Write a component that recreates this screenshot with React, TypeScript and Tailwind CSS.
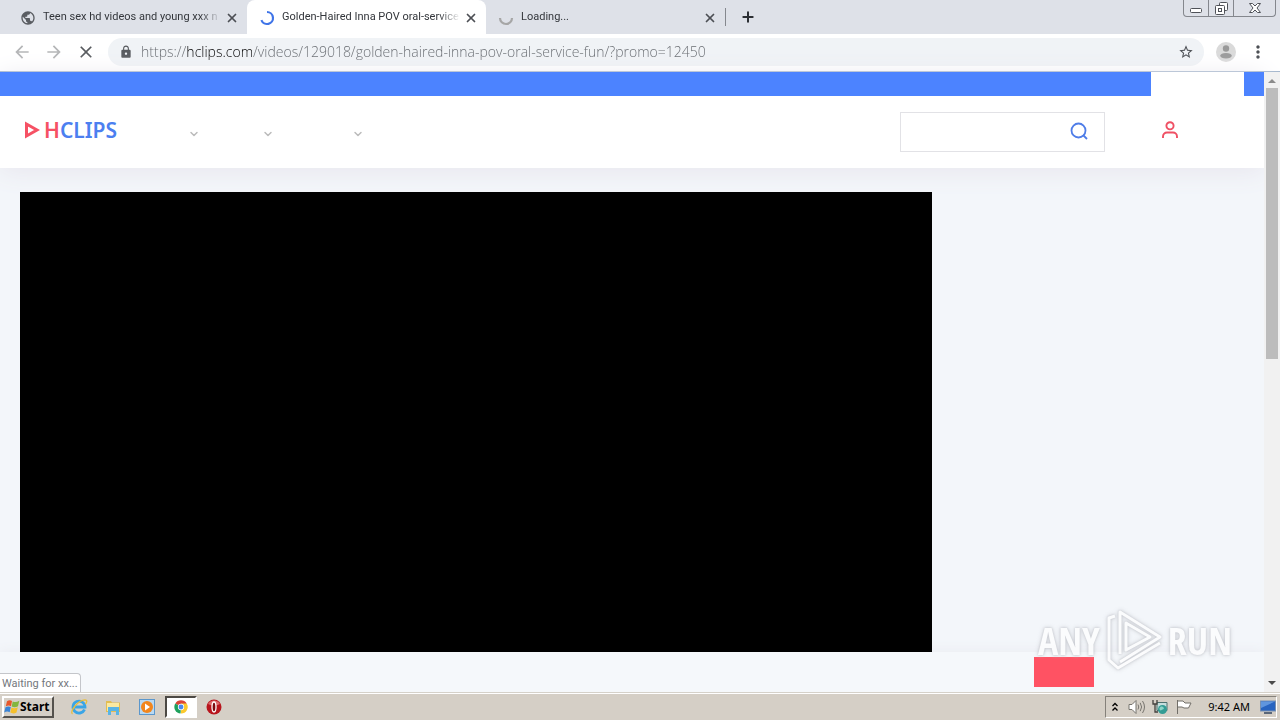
import { useState } from "react";
import type { ReactNode } from "react";
import {
  MdArrowBack,
  MdArrowForward,
  MdClose,
  MdLock,
  MdMoreVert,
  MdPublic,
  MdStarBorder,
} from "react-icons/md";
import { ChevronDown, Plus, X } from "lucide-react";

const tabs = [
  { title: "Teen sex hd videos and young xxx n", icon: "globe" },
  { title: "Golden-Haired Inna POV oral-service", icon: "active" },
  { title: "Loading...", icon: "waiting" },
];

const menus = [
  { label: "Videos", className: "w-2.5" },
  { label: "Categories", className: "w-2.5 ml-16" },
  { label: "Community", className: "w-2.5 ml-20" },
];

function TabIcon({ icon }: { icon: string }) {
  if (icon === "globe") {
    return <MdPublic className="size-4 shrink-0 text-[#5a5d62]" />;
  }
  if (icon === "active") {
    return (
      <svg viewBox="0 0 16 16" className="size-4 shrink-0" fill="none" stroke="#3f74e8" strokeWidth="2.200">
        <path d="M8 2a6 6 0 1 1-5.6 8.2" />
      </svg>
    );
  }
  return (
    <svg viewBox="0 0 16 16" className="size-4 shrink-0" fill="none" stroke="#a6a6a6" strokeWidth="2.200">
      <path d="M14 8A6 6 0 0 1 2 8" />
    </svg>
  );
}

function TabStrip() {
  const [current, setCurrent] = useState(1);

  return (
    <div className="flex h-[34px] shrink-0 items-stretch bg-[#dee1e8] pl-2">
      {tabs.map((tab, i) => (
        <div
          key={tab.title}
          className={`flex w-[239px] items-center pt-px pl-3 pr-2 ${
            i === current ? "rounded-t-lg bg-white" : ""
          }`}
        >
          <button
            onClick={() => setCurrent(i)}
            className="flex min-w-0 flex-1 items-center gap-[7px] text-left"
          >
            <TabIcon icon={tab.icon} />
            <span className="flex-1 whitespace-nowrap font-['Roboto',sans-serif] text-[11px] text-[#33363b] [mask-image:linear-gradient(90deg,#000_88%,transparent)]">
              {tab.title}
            </span>
          </button>
          <button aria-label="Close tab" className="ml-1">
            <X className="size-3.5 text-[#4c4f54]" strokeWidth={3} />
          </button>
        </div>
      ))}
      <div className="my-2 w-px bg-[#85888e]" />
      <button aria-label="New tab" className="px-3.5">
        <Plus className="size-4 text-[#2b2e33]" strokeWidth={3} />
      </button>
      <div className="ml-auto mr-1 flex h-[17px] rounded-b border border-t-0 border-[#84878d] text-[#4f5258]">
        <button aria-label="Minimize" className="flex w-[25px] items-center justify-center border-r border-[#84878d]">
          <svg viewBox="0 0 12 12" className="size-3" fill="#fff" stroke="currentColor">
            <rect x="0.5" y="6.5" width="11" height="4" rx="1" />
          </svg>
        </button>
        <button aria-label="Restore" className="flex w-[25px] items-center justify-center border-r border-[#84878d]">
          <svg viewBox="0 0 13 13" className="size-[13px]" fill="#fff" stroke="currentColor">
            <rect x="4.5" y="0.5" width="8" height="8" rx="1" />
            <rect x="0.5" y="3.5" width="9" height="9" rx="1" />
            <rect x="3.5" y="6.5" width="3" height="3" />
          </svg>
        </button>
        <button aria-label="Close" className="flex w-[41px] items-center justify-center">
          <svg viewBox="0 0 12 12" className="size-3" fill="#fff" stroke="currentColor">
            <path d="M.5 1.5h3L6 4l2.500-2.500h3L8 6l3.500 4.500h-3L6 8l-2.500 2.500h-3L4 6z" />
          </svg>
        </button>
      </div>
    </div>
  );
}

function Toolbar() {
  return (
    <div className="flex h-[38px] shrink-0 items-center border-b border-[#a3b6cc] bg-white pb-px pl-3">
      <div className="flex gap-3">
        <button aria-label="Back">
          <MdArrowBack className="size-5 text-[#b4b5b7]" />
        </button>
        <button aria-label="Forward">
          <MdArrowForward className="size-5 text-[#b4b5b7]" />
        </button>
        <button aria-label="Stop loading">
          <MdClose className="size-5 text-[#55585c]" />
        </button>
      </div>
      <div className="ml-3 flex h-7 flex-1 items-center rounded-full bg-[#f0f3f6] pl-[11px] pr-2.5">
        <MdLock className="size-3.5 text-[#55585c]" />
        <input
          aria-label="Address"
          defaultValue="https://hclips.com/videos/129018/golden-haired-inna-pov-oral-service-fun/?promo=12450"
          className="ml-2 min-w-0 flex-1 bg-[linear-gradient(90deg,#63676c_46px,#000_46px_112px,#63676c_112px)] bg-clip-text font-['Open_Sans',sans-serif] text-sm font-light text-transparent outline-none"
        />
        <button aria-label="Bookmark">
          <MdStarBorder className="size-4 text-[#4b4e53]" />
        </button>
      </div>
      <button aria-label="Profile" className="ml-3">
        <svg viewBox="0 0 20 20" className="size-5">
          <circle cx="10" cy="10" r="10" fill="#dadada" />
          <circle cx="10" cy="6.500" r="3.200" fill="#999" />
          <ellipse cx="10" cy="13.800" rx="5.800" ry="2.800" fill="#999" />
        </svg>
      </button>
      <button aria-label="Menu" className="ml-3 mr-3">
        <MdMoreVert className="size-5 text-[#4b4e53]" />
      </button>
    </div>
  );
}

function SiteHeader() {
  return (
    <header className="shrink-0 shadow-[0_4px_24px_#e8e6ee]">
      <div className="flex h-6 justify-end bg-[#4c83ff] pr-5">
        <a href="#upload" aria-label="Upload" className="w-[93px] bg-white" />
      </div>
      <div className="flex h-[72px] items-center bg-white pl-6">
        <a href="#home" className="flex w-24 items-center gap-1 pb-1">
          <svg viewBox="0 0 16 18" className="h-[18px] w-4" fill="none" stroke="#f65164" strokeWidth="3">
            <path d="M2.500 3v12L13 9z" />
          </svg>
          <span className="text-[21px] leading-6 font-semibold text-[#4c7ff0]">
            <span className="text-[#f65164]">H</span>CLIPS
          </span>
        </a>
        <nav className="ml-[68px] flex pt-1">
          {menus.map((menu) => (
            <button key={menu.label} aria-label={menu.label} className={menu.className}>
              <ChevronDown className="size-3 text-[#bcbcbc]" strokeWidth={3} />
            </button>
          ))}
        </nav>
        <form
          onSubmit={(e) => e.preventDefault()}
          className="ml-auto flex h-10 w-[205px] items-center border border-[#e2e2e6] pr-4"
        >
          <input aria-label="Search" className="min-w-0 flex-1 px-3 outline-none" />
          <button aria-label="Search" className="pb-0.5">
            <svg viewBox="0 0 18 18" className="size-[18px]" fill="none" stroke="#4f7de8" strokeWidth="1.800">
              <circle cx="8.500" cy="8.500" r="7" />
              <path d="m13 13 4 4" />
            </svg>
          </button>
        </form>
        <button aria-label="Sign in" className="ml-14 mr-[85px] pb-1">
          <svg viewBox="0 0 18 18" className="size-[18px]" fill="none" stroke="#ef5064" strokeWidth="1.900">
            <circle cx="9" cy="4.800" r="3.600" />
            <path d="M2 17v-1.500a4 4 0 0 1 4-4h6a4 4 0 0 1 4 4V17" />
          </svg>
        </button>
      </div>
    </header>
  );
}

function Watermark() {
  return (
    <div className="pointer-events-none absolute right-12 bottom-5 flex items-center gap-1 font-['Open_Sans_Condensed','Open_Sans',sans-serif] text-[38px] leading-none font-light text-white opacity-70 [filter:drop-shadow(0_0_1px_#b4b6bd)_drop-shadow(0_0_2px_#c4c6cc)]">
      <span>ANY</span>
      <svg viewBox="0 0 60 64" className="h-16 w-[60px]" fill="none" stroke="#fff" strokeWidth="3" strokeLinejoin="round">
        <path d="M16 46V4l40 25-40 25" />
        <path d="M22 42V15l24 14z" />
        <path d="M11 8 5 10v42l9 8 42-25" />
      </svg>
      <span>RUN</span>
    </div>
  );
}

function Scrollbar() {
  return (
    <div className="relative flex w-4 shrink-0 flex-col items-center bg-[#f1f1f1]">
      <svg viewBox="0 0 16 16" className="size-4 shrink-0" fill="#8b8b8b">
        <path d="M4 11h8L8 7z" />
      </svg>
      <div className="h-[271px] w-3 bg-[#bcbcbc]" />
      <svg viewBox="0 0 16 16" className="mt-auto size-4 shrink-0" fill="#4b4b4b">
        <path d="M4 5h8L8 9z" />
      </svg>
    </div>
  );
}

function Page() {
  return (
    <div className="relative flex min-h-0 flex-1">
      <div className="flex min-w-0 flex-1 flex-col bg-[#f3f6fa]">
        <SiteHeader />
        <main className="flex flex-1 px-5 pt-6">
          <div className="relative flex-1 bg-black" />
          <aside className="w-[312px]" />
        </main>
        <div className="flex h-10 shrink-0 items-center justify-end bg-[#f5f8fb] pr-[170px] shadow-[0_0_12px_#e9ebf0]">
          <button aria-label="Accept" className="h-[30px] w-[60px] bg-[#ff5263]" />
        </div>
      </div>
      <Scrollbar />
      <div className="absolute bottom-0 left-0 h-[19px] rounded-tr border border-b-0 border-l-0 border-[#c4c6ca] bg-white px-0.5 font-['Roboto',sans-serif] text-[11px] leading-5 text-[#74777c]">
        Waiting for xx...
      </div>
      <Watermark />
    </div>
  );
}

function TaskButton({ label, children }: { label: string; children: ReactNode }) {
  return (
    <button aria-label={label} className="flex w-[34px] items-center justify-center">
      {children}
    </button>
  );
}

function Taskbar() {
  return (
    <footer className="relative flex h-7 shrink-0 items-stretch border-t border-[#d5d1c9] bg-[#d5cfc6] pt-[3px] pr-[3px] pb-0.5 pl-0.5 shadow-[inset_0_1px_0_#fff]">
      <button className="flex w-[52px] items-center border-2 border-t-white border-r-[#55524d] border-b-[#55524d] border-l-white text-xs font-bold text-black">
        <svg viewBox="0 0 16 16" className="size-4 shrink-0">
          <path d="M3 2.200C5 1 6.500 1.200 8 2L7 7.200C5.500 6.300 3.800 6.300 1.800 7.300z" fill="#e8572a" />
          <path d="M8.700 2.400c2 1 4.200.9 6.600-.6L14 7.200c-2 1.300-4.300 1.400-6.300.4z" fill="#83b63f" />
          <path d="M1.500 8.200c1.900-1 3.600-1 5.300-.1L5.700 13.200c-1.700-1-3.600-.9-5.500.2z" fill="#3a84d6" />
          <path d="M7.500 8.500c2 1 4.200.9 6.300-.3L12.500 13.500c-2 1.200-4.200 1.200-6.200.1z" fill="#f6c02c" />
        </svg>
        Start
      </button>
      <div className="ml-2 flex">
        <TaskButton label="Internet Explorer">
          <svg viewBox="0 0 18 18" className="size-[18px]" fill="none">
            <path d="M14.500 11.500A6 6 0 1 1 15 9H5" stroke="#3aa5e6" strokeWidth="2.800" />
            <path d="M2.500 16C-1 14 8 2 15 1.800c3 .2 1.500 3 .5 4.200" stroke="#e8bd3c" strokeWidth="1.300" />
          </svg>
        </TaskButton>
        <TaskButton label="Explorer">
          <svg viewBox="0 0 18 18" className="size-[18px]">
            <path d="M2 3h5l1 1.500h8V14H2z" fill="#e2bd52" />
            <path d="M3 5h12v8H3z" fill="#fbe9a0" />
            <path d="M4 9h11v8h-3v-4H7v4H4z" fill="#59b4e5" />
          </svg>
        </TaskButton>
        <TaskButton label="Media Player">
          <svg viewBox="0 0 18 18" className="size-[18px]">
            <rect x="1.500" y="1.500" width="15" height="15" fill="#b9d9f2" stroke="#5b97cc" />
            <circle cx="9" cy="9" r="6" fill="#f2861d" />
            <path d="m7 5.500 5 3.500-5 3.500z" fill="#fff" />
          </svg>
        </TaskButton>
        <button
          aria-label="Chrome"
          className="ml-px flex w-8 items-center justify-center border-2 border-t-[#4c4944] border-r-white border-b-white border-l-[#4c4944] bg-white"
        >
          <svg viewBox="0 0 16 16" className="size-3.5">
            <path d="M8 8 1.500 4A7.500 7.500 0 0 1 14.500 4z" fill="#dc4437" />
            <path d="M8 8V4h6.500A7.500 7.500 0 0 1 8 15.500z" fill="#fbc92d" />
            <path d="m8 8-.5 7.500a7.500 7.500 0 0 1-6-11.500z" fill="#1fa15d" />
            <circle cx="8" cy="8" r="3.600" fill="#fff" />
            <circle cx="8" cy="8" r="2.800" fill="#4a88ee" />
          </svg>
        </button>
        <TaskButton label="Opera">
          <svg viewBox="0 0 16 16" className="size-4">
            <circle cx="8" cy="8" r="7.500" fill="#b8151d" />
            <path d="M2 5a7 7 0 0 1 12 0c-4 2-8 2-12 0z" fill="#dd6a6c" />
            <ellipse cx="8" cy="8" rx="2" ry="5" fill="#7d0b10" stroke="#fff" strokeWidth="1.300" />
          </svg>
        </TaskButton>
      </div>
      <div className="ml-auto flex items-center border border-t-[#85817a] border-r-white border-b-white border-l-[#85817a] pl-1 text-[11px] text-black">
        <svg viewBox="0 0 10 10" className="size-2.5" fill="none" stroke="#000" strokeWidth="1.300">
          <path d="M2.500 4 5 1.500 7.500 4M2.500 8.500 5 6l2.500 2.500" />
        </svg>
        <svg viewBox="0 0 18 16" className="ml-2 h-4 w-[18px]" fill="#fff" stroke="#77746e">
          <path d="M1 5.500h3l4-4v13l-4-4H1z" />
          <path d="M10 5.500q1.500 2.500 0 5M12.200 3.800q2.800 4.200 0 8.400M14.500 2q4 6 0 12" fill="none" />
        </svg>
        <svg viewBox="0 0 16 16" className="ml-1.5 size-4">
          <path d="M5 3.500h10v8H5z" fill="#c6dedd" stroke="#4d706f" />
          <path d="M1 1v4h4V1M3 5v8h3" fill="none" stroke="#44423f" strokeWidth="1.300" />
          <circle cx="10.500" cy="10.500" r="4.500" fill="#339c94" />
          <path d="M7.500 9c2-2.500 3-1 4-.5s0 2-1 2-1.500 2-3 0z" fill="#8ed3c7" />
        </svg>
        <svg viewBox="0 0 16 16" className="ml-2 size-4" fill="#fff" stroke="#716e68">
          <path d="M1.500 1v14M2 2h5l2 2h6l-2.500 5H8L6 8H2" />
        </svg>
        <span className="ml-4 mr-2.5 whitespace-nowrap">9:42 AM</span>
        <svg viewBox="0 0 16 14" className="h-3.5 w-4">
          <rect x=".5" y="1" width="15" height="10" fill="#2864c0" stroke="#7890b0" />
          <path d="M1 1.500h14L1 8z" fill="#6096de" />
          <path d="M4 13h8" stroke="#30445f" strokeWidth="1.500" />
        </svg>
      </div>
    </footer>
  );
}

export default function App() {
  return (
    <div className="flex h-screen flex-col overflow-hidden font-['Noto_Sans',sans-serif]">
      <TabStrip />
      <Toolbar />
      <Page />
      <Taskbar />
    </div>
  );
}
